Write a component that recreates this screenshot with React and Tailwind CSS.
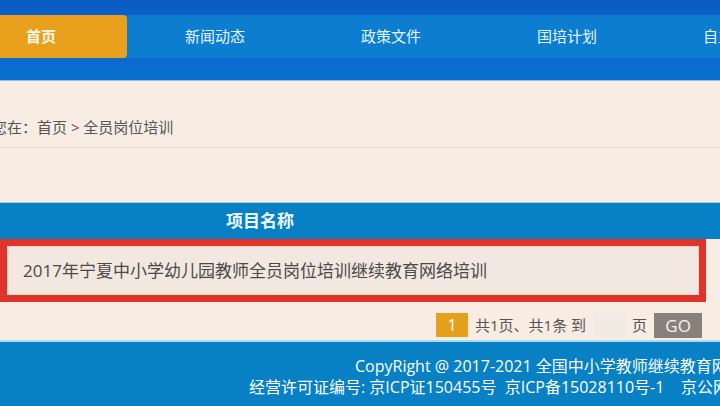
export default function App() {
  const font = { fontFamily: '"Open Sans", "Noto Sans CJK SC", sans-serif' };
  return (
    <div className="w-[720px] h-[406px] overflow-hidden bg-[#f8ece3] flex flex-col" style={font}>
      {/* Header */}
      <div className="h-[81px] shrink-0 flex flex-col bg-gradient-to-b from-[#0a5cc2] to-[#0a6fd2] border-b border-[#8fc4ea]">
        <div className="h-[15px]" />
        <div className="h-[43px] flex bg-[#0d7dd0] text-[15px] text-white">
          <div className="w-[127px] shrink-0 bg-[#e9a01d] rounded-r-[4px] flex items-center pl-[26px] text-[#fff8e8] font-bold">首页</div>
          <div className="w-[176px] shrink-0 flex items-center justify-center text-[#e6f7ff]">新闻动态</div>
          <div className="w-[176px] shrink-0 flex items-center justify-center text-[#e6f7ff]">政策文件</div>
          <div className="w-[176px] shrink-0 flex items-center justify-center text-[#e6f7ff]">国培计划</div>
          <div className="w-[176px] shrink-0 flex items-center pl-[48px] text-[#e6f7ff] whitespace-nowrap">自主选学</div>
        </div>
        <div className="flex-1" />
      </div>

      {/* Breadcrumb */}
      <div className="h-[67px] shrink-0 border-b border-[#ead9cc] flex items-end pb-[10px] text-[15px] leading-[20px] text-[#555] whitespace-nowrap">
        <span className="ml-[-8px]">您在：首页 &gt; 全员岗位培训</span>
      </div>

      <div className="h-[54px] shrink-0" />

      {/* Table header */}
      <div className="h-[37px] shrink-0 bg-[#0780c6] border-t border-[#9fd3f0] flex items-center">
        <span className="ml-[226px] text-[17px] font-bold text-[#eefaff]">项目名称</span>
      </div>

      {/* Row with red frame */}
      <div className="w-[706px] h-[63px] shrink-0 border-[7px] border-[#e0342a] bg-[#f3e8df] flex items-center">
        <div className="flex-1 h-full border border-[#e8d6c9] flex items-center pl-[15px] text-[17px] text-[#4a4a4a] whitespace-nowrap">
          2017年宁夏中小学幼儿园教师全员岗位培训继续教育网络培训
        </div>
      </div>

      {/* Pagination */}
      <div className="h-[38px] shrink-0 flex items-start pt-[11px] pl-[436px] text-[15px] text-[#555] whitespace-nowrap">
        <div className="w-[32px] h-[24px] bg-[#e6a11c] text-white flex items-center justify-center text-[16px]">1</div>
        <span className="ml-[7px] leading-[24px]">共1页、共1条 到</span>
        <div className="ml-[8px] w-[32px] h-[24px] bg-[#f2ebe4]" />
        <span className="ml-[6px] leading-[24px]">页</span>
        <div className="ml-[7px] w-[48px] h-[25px] bg-[#8a807a] text-[#f4f4f4] flex items-center justify-center text-[17px]">GO</div>
      </div>

      {/* Footer */}
      <div className="flex-1 bg-[#0780c4] border-t-2 border-[#a7dcf2] text-white text-[16px] whitespace-nowrap flex flex-col">
        <div className="pl-[355px] pt-[14px] leading-[21px]">CopyRight @ 2017-2021 全国中小学教师继续教育网</div>
        <div className="pl-[249px] leading-[21px]">经营许可证编号: 京ICP证150455号&nbsp;&nbsp;京ICP备15028110号-1&nbsp;&nbsp;&nbsp;&nbsp;京公网安备</div>
      </div>
    </div>
  );
}
